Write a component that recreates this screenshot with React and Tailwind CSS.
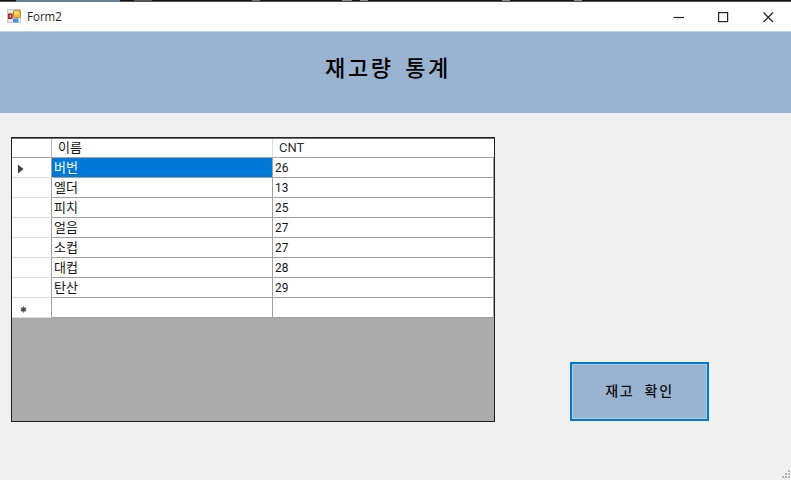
const rows = [
  ['버번', '26'],
  ['엘더', '13'],
  ['피치', '25'],
  ['얼음', '27'],
  ['소컵', '27'],
  ['대컵', '28'],
  ['탄산', '29'],
  ['', ''],
];

const columns = 'grid grid-cols-[40px_221px_221px]';

function FormIcon() {
  return (
    <svg width="15" height="15" viewBox="0 0 15 15" className="ml-[7px]">
      <rect x="0.5" y="0.5" width="13" height="13" fill="#e9e9ea" stroke="#c9cbd0" />
      <rect x="1" y="4.5" width="4.6" height="5.5" fill="#b3242b" />
      <rect x="2.6" y="6" width="1.4" height="2.6" fill="#f0b0a8" />
      <rect x="6.5" y="1.5" width="7" height="7" rx="0.8" fill="#f2bd32" stroke="#b98a2b" />
      <rect x="7.5" y="2.3" width="4" height="3" fill="#fbe07a" />
      <rect x="6" y="9.5" width="5.5" height="4" rx="0.5" fill="#4b8fe8" />
    </svg>
  );
}

function TitleBar() {
  return (
    <header className="flex h-[29px] items-center bg-white text-[#1f1f1f]">
      <FormIcon />
      <span className="ml-[5px] inline-block origin-left scale-x-[0.96] font-['Open_Sans','Noto_Sans',sans-serif] text-[12px] leading-4">Form2</span>
      <div className="ml-auto flex items-center">
        <svg width="118" height="14" viewBox="0 0 118 14" fill="none" stroke="#222" strokeWidth="1.2">
          <path d="M0.5 7.5H11" />
          <rect x="45.6" y="2.6" width="9" height="9" />
          <path d="M90.5 2.5L100 12M100 2.5L90.5 12" />
        </svg>
      </div>
    </header>
  );
}

function RowMarker({ index }) {
  if (index === 0)
    return (
      <svg width="6" height="10" viewBox="0 0 6 10" className="ml-[6px] mt-[2px]">
        <path d="M0 0.5L5.5 5L0 9.5Z" fill="#404040" />
      </svg>
    );
  if (index === 7)
    return (
      <svg width="7" height="7" viewBox="0 0 7 7" className="ml-[8px] mt-[3px]" stroke="#555" strokeWidth="1.2">
        <path d="M3.5 0.5V6.5M0.8 2L6.2 5M6.2 2L0.8 5" />
        <circle cx="3.5" cy="3.5" r="1.6" fill="#444" />
      </svg>
    );
  return null;
}

function DataGrid() {
  return (
    <div className="ml-[11px] mt-[24px] h-[285px] w-[484px] border border-[#202020] bg-[#ababab] font-['Noto_Sans_CJK_KR',sans-serif] text-[13px] leading-[18px] text-[#151515]">
      <div className={`${columns} h-[20px] border-b border-[#a6a6a6] border-t border-t-[#707070] bg-white`}>
        <div className="border-r border-[#b5b5b5]" />
        <div className="border-r border-[#e0e0e0] pl-[6px] leading-[16px]">이름</div>
        <div className="pl-[6px] font-['Roboto',sans-serif] text-[13px] leading-[17px] text-[#303030]">CNT</div>
      </div>
      {rows.map(([name, count], i) => (
        <div key={i} className={`${columns} h-[20px] grid-rows-[20px] bg-white`}>
          <div className="flex items-center border-r border-b border-r-[#a0a0a0] border-b-[#dedede]">
            <RowMarker index={i} />
          </div>
          <div className={`border-r border-b border-[#a0a0a0] pl-[2px] ${i === 0 ? 'bg-[#0078d7] text-white' : ''}`}>{name}</div>
          <div className="flex border-r border-b border-[#a0a0a0] pl-[2px]">
            <span className="origin-left scale-x-[0.88] font-['Roboto',sans-serif] text-[13.5px] leading-[19px]">{count}</span>
          </div>
        </div>
      ))}
    </div>
  );
}

function SizeGrip() {
  return (
    <svg width="10" height="10" viewBox="0 0 10 10" fill="#b5b5b5" className="ml-auto self-end">
      <path d="M7 0h2v2h-2zM4 3h2v2h-2zM7 3h2v2h-2zM1 6h2v2h-2zM4 6h2v2h-2zM7 6h2v2h-2z" />
    </svg>
  );
}

export default function App() {
  return (
    <div className="flex h-[480px] w-[791px] flex-col overflow-hidden bg-[#f0f0f0]">
      <div className="flex h-[2px] shrink-0 border-b border-[#55504f] bg-[#171414]">
        <div className="ml-[16px] h-[2px] w-[104px] bg-[#668096]" />
        <div className="ml-[14px] h-px w-[18px] bg-[#555]" />
        <div className="ml-[100px] h-px w-[8px] bg-[#777]" />
        <div className="ml-[82px] h-px w-[10px] bg-[#888]" />
        <div className="ml-[8px] h-px w-[8px] bg-[#888]" />
        <div className="ml-[134px] h-px w-[8px] bg-[#888]" />
        <div className="ml-[64px] h-px w-[8px] bg-[#888]" />
      </div>
      <TitleBar />
      <section className="flex h-[82px] shrink-0 justify-center border-t border-[#c5d2e0] bg-[#99b3d1] pr-[15px] pt-[18px]">
        <h1 className="whitespace-nowrap font-['Noto_Sans_CJK_KR',sans-serif] text-[22px] font-medium leading-[32px] tracking-[2.6px] text-black [word-spacing:4px]">재고량 통계</h1>
      </section>
      <main className="flex min-h-0 flex-1">
        <DataGrid />
        <div className="flex flex-1 flex-col">
          <button className="ml-[75px] mt-[249px] flex h-[59px] w-[139px] shrink-0 items-center justify-center border-2 border-[#0078d7] bg-[#99b3d1] pb-[3px] font-['Noto_Sans_CJK_KR',sans-serif] text-[14px] font-medium tracking-[1.8px] text-[#101010] shadow-[inset_0_0_0_1px_#b7c9dd]">
            재고&nbsp; 확인
          </button>
          <div className="mt-auto flex">
            <SizeGrip />
          </div>
        </div>
      </main>
    </div>
  );
}
